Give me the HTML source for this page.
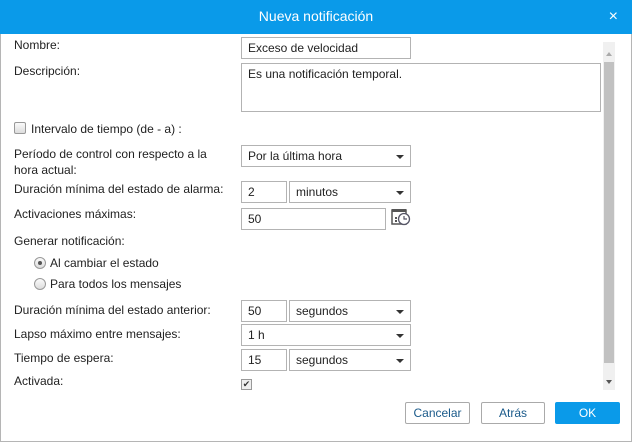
<!DOCTYPE html><html><head><style>
body{margin:0;width:632px;height:442px;overflow:hidden;background:#fff;font-family:"Liberation Sans",Arial,sans-serif;font-size:12px;color:#222}
.d{position:absolute;left:0;top:0;width:630px;height:440px;border:1px solid #b5b5b5}
.h{position:absolute;left:0;top:0;width:632px;height:34px;background:#0a9ae9;color:#fff;font-size:14px;text-align:center;line-height:32px}
.x{position:absolute;right:14px;top:0;font-size:16px;line-height:34px}
.l{position:absolute;left:14px;line-height:14px;white-space:nowrap}
.i{position:absolute;box-sizing:border-box;border:1px solid #b3b3b3;height:22px;line-height:20px;padding-left:6px;background:#fff;white-space:nowrap}
.s:after{content:"";position:absolute;right:6px;top:9px;border-left:4px solid transparent;border-right:4px solid transparent;border-top:4px solid #333}
.b{position:absolute;top:402px;height:22px;box-sizing:border-box;border:1px solid #aaa;border-radius:2px;text-align:center;line-height:20px;color:#1a5a8a;background:#fff}
.r{position:absolute;left:34px;width:12px;height:12px;border-radius:50%;border:1px solid #999;box-sizing:border-box;background:linear-gradient(#fafafa,#ddd)}
</style></head><body><div class="d"></div>
<div class="h">Nueva notificación<span class="x">×</span></div>
<div class="l" style="top:38px">Nombre:</div>
<div class="i" style="left:241px;top:37px;width:170px">Exceso de velocidad</div>
<div class="l" style="top:64px">Descripción:</div>
<div class="i" style="left:241px;top:63px;width:360px;height:49px;line-height:14px;padding-top:3px">Es una notificación temporal.</div>
<div style="position:absolute;left:14px;top:122px;width:12px;height:12px;border:1px solid #999;border-radius:2px;box-sizing:border-box;background:linear-gradient(#fafafa,#ddd)"></div>
<div class="l" style="top:122px;left:31px">Intervalo de tiempo (de - a) :</div>
<div class="l" style="top:146px;line-height:16px">Período de control con respecto a la<br>hora actual:</div>
<div class="i s" style="left:241px;top:145px;width:170px">Por la última hora</div>
<div class="l" style="top:182px">Duración mínima del estado de alarma:</div>
<div class="i" style="left:241px;top:181px;width:46px">2</div>
<div class="i s" style="left:289px;top:181px;width:122px">minutos</div>
<div class="l" style="top:207px">Activaciones máximas:</div>
<div class="i" style="left:241px;top:208px;width:145px">50</div>
<svg style="position:absolute;left:391px;top:208px" width="20" height="18" viewBox="0 0 20 18"><rect x="1" y="2" width="14" height="14" fill="none" stroke="#555" stroke-width="1.5"/><rect x="1" y="1" width="14" height="3" fill="#555"/><circle cx="13" cy="11" r="5.5" fill="#fff" stroke="#556" stroke-width="1.3"/><path d="M13 8v3h3" fill="none" stroke="#556" stroke-width="1.2"/><rect x="4" y="9" width="2" height="2" fill="#555"/><rect x="4" y="12" width="2" height="2" fill="#555"/></svg>
<div class="l" style="top:234px">Generar notificación:</div>
<div class="r" style="top:257px"><div style="position:absolute;left:3px;top:3px;width:4px;height:4px;border-radius:50%;background:#555"></div></div>
<div class="l" style="top:256px;left:50px">Al cambiar el estado</div>
<div class="r" style="top:278px"></div>
<div class="l" style="top:277px;left:50px">Para todos los mensajes</div>
<div class="l" style="top:303px">Duración mínima del estado anterior:</div>
<div class="i" style="left:241px;top:300px;width:46px">50</div>
<div class="i s" style="left:289px;top:300px;width:122px">segundos</div>
<div class="l" style="top:327px">Lapso máximo entre mensajes:</div>
<div class="i s" style="left:241px;top:324px;width:170px">1 h</div>
<div class="l" style="top:351px">Tiempo de espera:</div>
<div class="i" style="left:241px;top:349px;width:46px">15</div>
<div class="i s" style="left:289px;top:349px;width:122px">segundos</div>
<div class="l" style="top:374px">Activada:</div>
<div style="position:absolute;left:241px;top:379px;width:11px;height:11px;border:1px solid #999;box-sizing:border-box;background:#eee;font-size:9px;line-height:9px;text-align:center;color:#333">✔</div>
<div style="position:absolute;left:603px;top:42px;width:12px;height:348px;background:#f0f0f0"></div>
<div style="position:absolute;left:604px;top:62px;width:10px;height:301px;background:#c1c1c1"></div>
<div style="position:absolute;left:606px;top:52px;border-left:3px solid transparent;border-right:3px solid transparent;border-bottom:4px solid #aaa"></div>
<div style="position:absolute;left:606px;top:380px;border-left:3px solid transparent;border-right:3px solid transparent;border-top:4px solid #555"></div>
<div class="b" style="left:405px;width:65px">Cancelar</div>
<div class="b" style="left:481px;width:64px">Atrás</div>
<div class="b" style="left:555px;width:65px;background:#0a9ae9;border-color:#0a9ae9;color:#fff">OK</div>
</body></html>
